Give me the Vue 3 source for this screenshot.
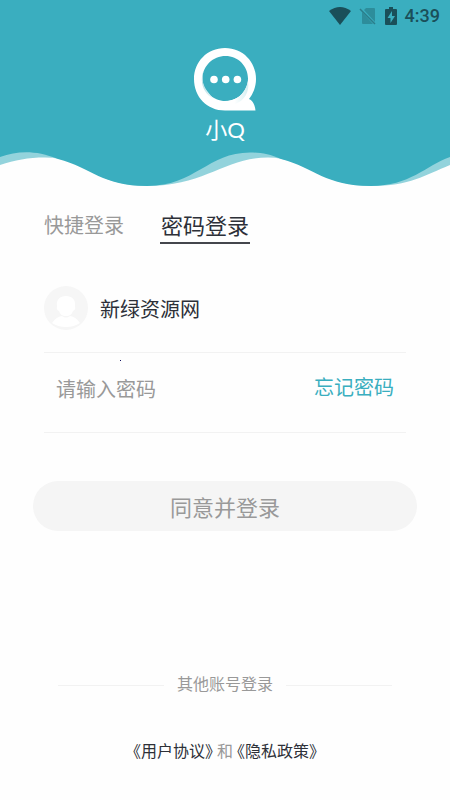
<script setup>
import { ref } from 'vue'

const tabs = ['快捷登录', '密码登录']
const active = ref(1)
const password = ref('')
</script>

<template>
  <div class="page">
    <header class="hero">
      <div class="status">
        <svg class="wifi" viewBox="0 0 22 18" aria-hidden="true">
          <path d="M0 4Q11-4 22 4L11 18Z" fill="#1a4f59" />
        </svg>
        <svg class="sim" viewBox="0 0 18 18" aria-hidden="true">
          <path d="M7 1h8q1 0 1 1v13L5 3ZM3 5l11 12H4q-1 0-1-1Z" fill="#2d8d9b" />
          <path d="M1 2l15 15" stroke="#2b7d8a" stroke-width="1.5" />
        </svg>
        <svg class="battery" viewBox="0 0 12 18" aria-hidden="true">
          <path d="M4 0h4v2h3q1 0 1 1v14q0 1-1 1H1q-1 0-1-1V3q0-1 1-1h3Z" fill="#1a4f59" />
          <path d="M7 4L2.500 11H5.500V16L10 9H7Z" fill="#3aaebf" />
        </svg>
        <time class="clock">4:39</time>
      </div>
      <div class="brand">
        <svg class="logo" viewBox="0 0 64 64" aria-hidden="true">
          <defs>
            <linearGradient id="fold" x1="0" y1="0" x2="1" y2="0">
              <stop offset="0" stop-color="#b5e0e6" />
              <stop offset="0.300" stop-color="#fff" />
              <stop offset="0.700" stop-color="#fff" />
              <stop offset="1" stop-color="#d5eff2" />
            </linearGradient>
          </defs>
          <path
            fill="#fff"
            fill-rule="evenodd"
            d="M32 0C50 0 63 14 63 31C63 39 60 46 56 51C60 53 62 57 62.500 62.500H32C14 62.500 1 49 1 31C1 14 14 0 32 0ZM32.500 8C20 8 9.500 18 9.500 30.500C9.500 43 20 53 32.500 53C45 53 55 43 55 30.500C55 18 45 8 32.500 8Z"
          />
          <path
            fill="url(#fold)"
            d="M20 11C5 21 5 43 21 51C12 42 9 35 9.500 29C10 21 13 16 20 11ZM32 53C43 53 52 47 55 33C57 44 51 53 42 56Z"
          />
          <circle cx="21" cy="31.500" r="3.800" fill="#fff" />
          <circle cx="32.700" cy="31.500" r="3.800" fill="#fff" />
          <circle cx="44.400" cy="31.500" r="3.800" fill="#fff" />
        </svg>
        <span class="name">小Q</span>
      </div>
      <svg class="wave" viewBox="0 0 450 40" preserveAspectRatio="none" aria-hidden="true">
        <path
          fill="#93d3dc"
          d="M0 0H450V17C425 27 410 38 371 38C320 38 305 9.500 268 9.500C225 9.500 205 38 147 38C95 38 85 9.500 45 9.500C28 9.500 15 12 0 17Z"
        />
        <path
          fill="#3aaebf"
          d="M0 0H450V9C425 18 410 38 371 38C325 38 315 20 281 11C270 6 260 4.500 250 4.500C208 4.500 195 38 147 38C102 38 92 20 58 11C35 2 18 3 0 9Z"
        />
      </svg>
    </header>

    <main class="content">
      <nav class="tabs">
        <button
          v-for="(tab, i) in tabs"
          :key="tab"
          type="button"
          class="tab"
          :class="{ active: active === i }"
          @click="active = i"
        >{{ tab }}</button>
      </nav>

      <form class="form" @submit.prevent>
        <div class="account">
          <svg class="avatar" viewBox="0 0 44 44" aria-hidden="true">
            <circle cx="22" cy="22" r="22" fill="#f6f6f6" />
            <path
              fill="#fff"
              d="M22 10C28 10 32 14 31 20Q32 24 29 25C28 28 26 30 22 30C18 30 16 28 15 25Q12 24 13 20C12 14 16 10 22 10ZM8 37Q12 31 18 30Q22 33 26 30Q32 31 36 37Q30 41 22 41Q14 41 8 37Z"
            />
          </svg>
          <span class="user">新绿资源网</span>
        </div>
        <div class="field">
          <input v-model="password" class="input" type="password" placeholder="请输入密码" aria-label="请输入密码" />
          <a class="forgot" href="#">忘记密码</a>
          <i class="speck"></i>
        </div>
        <button class="submit" type="submit">同意并登录</button>
      </form>

      <footer class="footer">
        <div class="other"><span>其他账号登录</span></div>
        <p class="terms"><a href="#">《用户协议》</a><span>和</span><a href="#">《隐私政策》</a></p>
      </footer>
    </main>
  </div>
</template>

<style>
body {
  background: #fefefe;
}
</style>

<style scoped>
.page {
  display: flex;
  flex-direction: column;
  min-height: 100vh;
  font-family: Roboto, "Noto Sans CJK SC", sans-serif;
  color: #2d3038;
}
button,
input {
  font-family: inherit;
  border: 0;
  padding: 0;
  background: none;
}
a {
  color: inherit;
  text-decoration: none;
}
.hero {
  display: flex;
  flex-direction: column;
}
.status {
  display: flex;
  justify-content: flex-end;
  align-items: center;
  height: 32px;
  padding-right: 10px;
  background: #3aaebf;
  color: #1a4f59;
}
.wifi {
  width: 22px;
  height: 18px;
  margin-right: 8px;
}
.sim {
  width: 18px;
  height: 18px;
  margin-right: 8px;
}
.battery {
  width: 12px;
  height: 18px;
  margin-right: 8px;
}
.clock {
  font-size: 18px;
  line-height: 24px;
  font-weight: 500;
}
.brand {
  display: flex;
  flex-direction: column;
  align-items: center;
  height: 116px;
  padding-top: 16px;
  box-sizing: border-box;
  background: #3aaebf;
  color: #fff;
}
.logo {
  width: 64px;
  height: 64px;
}
.name {
  margin-top: 6px;
  font-family: Lato, "Noto Sans CJK SC", sans-serif;
  font-size: 22px;
  line-height: 24px;
}
.wave {
  display: block;
  width: 100%;
  height: 40px;
}
.content {
  display: flex;
  flex-direction: column;
  flex: 1;
}
.tabs {
  display: flex;
  align-items: flex-start;
  gap: 36px;
  padding: 22px 44px 0;
}
.tab {
  font-size: 20px;
  line-height: 32px;
  color: #999;
  border-bottom: 2px solid transparent;
}
.tab.active {
  padding: 2px 1px 0;
  font-size: 22px;
  line-height: 30px;
  color: #2d3038;
  border-color: #44464c;
}
.form {
  display: flex;
  flex-direction: column;
}
.account {
  display: flex;
  align-items: center;
  gap: 12px;
  height: 88px;
  margin: 20px 44px 0;
  border-bottom: 1px solid #f2f2f2;
}
.avatar {
  width: 44px;
  height: 44px;
}
.user {
  padding-top: 4px;
  font-size: 20px;
  line-height: 32px;
}
.field {
  position: relative;
  display: flex;
  align-items: center;
  height: 79px;
  margin: 0 44px;
  padding: 0 12px;
  border-bottom: 1px solid #f2f2f2;
}
.input {
  flex: 1;
  min-width: 0;
  height: 32px;
  padding-bottom: 6px;
  font-size: 20px;
  color: #2d3038;
  outline: none;
}
.input::placeholder {
  color: #999;
  opacity: 1;
}
.forgot {
  font-size: 20px;
  line-height: 32px;
  color: #3aaebf;
  padding-bottom: 10px;
}
.speck {
  position: absolute;
  left: 76px;
  top: 7px;
  width: 1px;
  height: 1px;
  background: #101060;
}
.submit {
  height: 50px;
  margin: 48px 33px 0;
  border-radius: 25px;
  background: #f5f5f5;
  color: #999;
  font-size: 22px;
}
.footer {
  margin-top: auto;
  padding-bottom: 36px;
}
.other {
  display: flex;
  align-items: center;
  gap: 13px;
  margin: 0 58px;
  font-size: 16px;
  line-height: 24px;
  color: #999;
}
.other::before,
.other::after {
  content: "";
  flex: 1;
  height: 1px;
  background: #f2f2f2;
}
.terms {
  display: flex;
  justify-content: center;
  gap: 4px;
  margin: 43px 0 0;
  font-size: 16px;
  line-height: 24px;
  font-feature-settings: "halt";
}
.terms span {
  color: #999;
}
</style>
